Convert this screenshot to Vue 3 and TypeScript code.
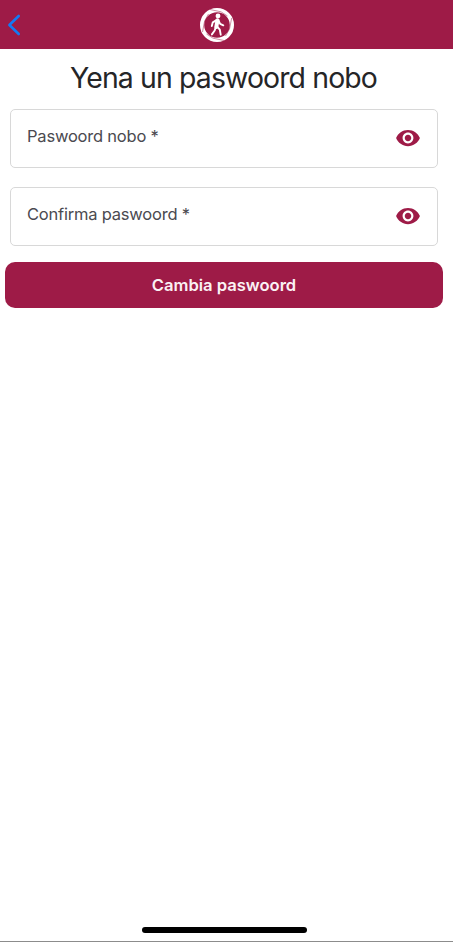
<script setup lang="ts">
import { ref } from 'vue'

interface Field {
  id: string
  label: string
}

const fields: Field[] = [
  { id: 'new', label: 'Paswoord nobo *' },
  { id: 'confirm', label: 'Confirma paswoord *' },
]
const visible = ref<Record<string, boolean>>({})

function toggle(id: string): void {
  visible.value[id] = !visible.value[id]
}
</script>

<template>
  <div class="screen">
    <header class="bar">
      <svg class="back" viewBox="0 0 14 22" width="14" height="22">
        <path d="M11.7 2 2.4 11l9.3 9" />
      </svg>
      <svg class="logo" viewBox="0 0 36 36" width="36" height="36">
        <circle class="ring" cx="18" cy="18" r="14.9" />
        <path class="cut" d="M3.500 25 5.600 14 9.500 7M11 2.500 22 4.800 28.500 9M32.700 11 30.500 22 26.500 29M25 33.500 14 31.200 7.500 27" />
        <circle class="head" cx="19" cy="8.900" r="2.450" />
        <path class="body" d="M18.500 13.200 17.300 20" />
        <path class="limb" d="M17.500 13.200 13.800 15.300 12.800 19M19.300 13.300 21.200 16.900 24.300 18.300M16.900 19.500 15.700 23.500 12.900 27.400M18 19.300 20.800 22.700 21.700 27.700" />
      </svg>
    </header>
    <main class="content">
      <h1 class="title">Yena un paswoord nobo</h1>
      <form class="form" @submit.prevent>
        <div v-for="f in fields" :key="f.id" class="field">
          <span class="label">{{ f.label }}</span>
          <svg class="eye" viewBox="0 0 24 24" width="26" height="26" @click="toggle(f.id)">
            <path d="M12 4.500C7 4.500 2.730 7.610 1 12c1.730 4.390 6 7.500 11 7.500s9.270-3.110 11-7.500c-1.730-4.390-6-7.500-11-7.500zM12 17c-2.760 0-5-2.240-5-5s2.240-5 5-5 5 2.240 5 5-2.240 5-5 5zm0-8c-1.660 0-3 1.340-3 3s1.340 3 3 3 3-1.340 3-3-1.340-3-3-3z" />
          </svg>
        </div>
        <button class="submit" type="submit">Cambia paswoord</button>
      </form>
    </main>
    <footer class="foot"><div class="home"></div></footer>
  </div>
</template>

<style>
body {
  margin: 0;
  background: #fff;
}
</style>

<style scoped>
.screen {
  box-sizing: border-box;
  width: 453px;
  height: 942px;
  display: flex;
  flex-direction: column;
  border-bottom: 1px solid #8c8c8c;
  background: #fff;
  font-family: Inter, 'Liberation Sans', sans-serif;
}
.bar {
  box-sizing: border-box;
  height: 49px;
  flex: none;
  display: grid;
  grid-template-columns: 192px 1fr;
  align-items: center;
  padding: 1px 0 0 7px;
  background: #9e1b47;
}
.back path {
  fill: none;
  stroke: #137af4;
  stroke-width: 2.6;
  stroke-linecap: round;
  stroke-linejoin: round;
}
.back,
.logo {
  display: block;
}
.ring {
  fill: none;
  stroke: #fff;
  stroke-width: 4.2;
}
.cut {
  fill: none;
  stroke: #9e1b47;
  stroke-width: 0.5;
}
.head {
  fill: #fff;
}
.body {
  stroke: #fff;
  stroke-width: 4;
  stroke-linecap: round;
}
.limb {
  fill: none;
  stroke: #fff;
  stroke-width: 1.9;
  stroke-linecap: round;
  stroke-linejoin: round;
}
.content {
  flex: 1;
  width: 448px;
}
.title {
  margin: 0;
  padding-right: 1px;
  height: 60px;
  line-height: 58px;
  text-align: center;
  white-space: nowrap;
  font-size: 28.4px;
  font-weight: 400;
  letter-spacing: -0.86px;
  color: #252527;
}
.form {
  display: flex;
  flex-direction: column;
}
.field {
  box-sizing: border-box;
  height: 59px;
  margin: 0 10px 19px;
  padding: 0 16px 1px;
  display: flex;
  justify-content: space-between;
  align-items: center;
  border: 1px solid #d8d8d8;
  border-radius: 5px;
}
.label {
  padding-bottom: 4px;
  font-size: 16.5px;
  line-height: 22px;
  letter-spacing: -0.21px;
  color: #4b4a50;
}
.eye {
  fill: #9e1b47;
}
.submit {
  height: 46px;
  margin: -2.6px 5px 0;
  padding: 1px 0 0;
  border: 0;
  border-radius: 10px;
  background: #9e1b47;
  color: #fbf1f4;
  font: 600 16.6px/45px Inter, 'Liberation Sans', sans-serif;
  letter-spacing: -0.02px;
}
.foot {
  width: 448px;
  display: flex;
  justify-content: center;
  padding-bottom: 8px;
}
.home {
  width: 165px;
  height: 6px;
  border-radius: 3px;
  background: #000;
}
</style>
